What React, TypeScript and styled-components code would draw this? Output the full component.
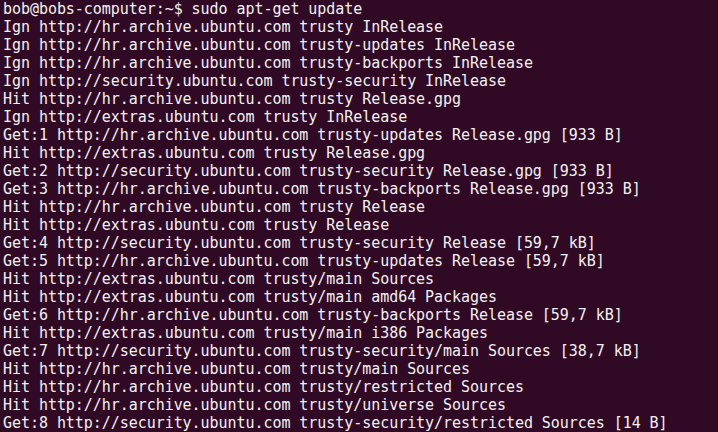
import React from "react";
import styled, { createGlobalStyle } from "styled-components";

const Global = createGlobalStyle`
  html, body {
    margin: 0;
    padding: 0;
    background: #300a24;
    overflow: hidden;
  }
`;

const Terminal = styled.div`
  width: 718px;
  height: 432px;
  box-sizing: border-box;
  padding: 0 0 0 3px;
  background: #300a24;
  color: #f4f1f2;
  font-family: "DejaVu Sans Mono", "Liberation Mono", monospace;
  font-size: 15px;
  letter-spacing: -0.05px;
  line-height: 18px;
  overflow: hidden;
  display: flex;
  flex-direction: column;
`;

const Line = styled.div`
  white-space: pre;
  height: 18px;
`;

const lines = [
  "bob@bobs-computer:~$ sudo apt-get update",
  "Ign http://hr.archive.ubuntu.com trusty InRelease",
  "Ign http://hr.archive.ubuntu.com trusty-updates InRelease",
  "Ign http://hr.archive.ubuntu.com trusty-backports InRelease",
  "Ign http://security.ubuntu.com trusty-security InRelease",
  "Hit http://hr.archive.ubuntu.com trusty Release.gpg",
  "Ign http://extras.ubuntu.com trusty InRelease",
  "Get:1 http://hr.archive.ubuntu.com trusty-updates Release.gpg [933 B]",
  "Hit http://extras.ubuntu.com trusty Release.gpg",
  "Get:2 http://security.ubuntu.com trusty-security Release.gpg [933 B]",
  "Get:3 http://hr.archive.ubuntu.com trusty-backports Release.gpg [933 B]",
  "Hit http://hr.archive.ubuntu.com trusty Release",
  "Hit http://extras.ubuntu.com trusty Release",
  "Get:4 http://security.ubuntu.com trusty-security Release [59,7 kB]",
  "Get:5 http://hr.archive.ubuntu.com trusty-updates Release [59,7 kB]",
  "Hit http://extras.ubuntu.com trusty/main Sources",
  "Hit http://extras.ubuntu.com trusty/main amd64 Packages",
  "Get:6 http://hr.archive.ubuntu.com trusty-backports Release [59,7 kB]",
  "Hit http://extras.ubuntu.com trusty/main i386 Packages",
  "Get:7 http://security.ubuntu.com trusty-security/main Sources [38,7 kB]",
  "Hit http://hr.archive.ubuntu.com trusty/main Sources",
  "Hit http://hr.archive.ubuntu.com trusty/restricted Sources",
  "Hit http://hr.archive.ubuntu.com trusty/universe Sources",
  "Get:8 http://security.ubuntu.com trusty-security/restricted Sources [14 B]",
];

export default function App() {
  return (
    <>
      <Global />
      <Terminal>
        {lines.map((l, i) => (
          <Line key={i}>{l}</Line>
        ))}
      </Terminal>
    </>
  );
}
